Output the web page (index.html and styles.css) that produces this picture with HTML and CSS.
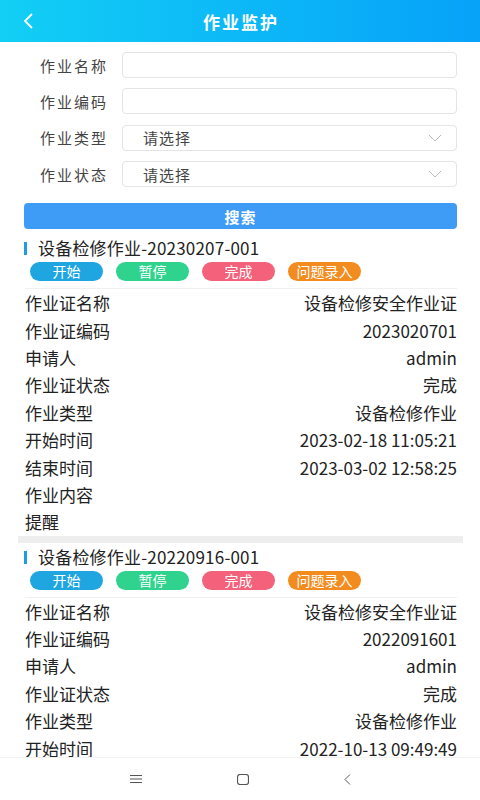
FILE: index.html
```html
<!DOCTYPE html>
<html lang="zh-CN">
<head>
    <meta charset="UTF-8">
    <meta name="viewport" content="width=device-width, initial-scale=1.0">
    <title>作业监护</title>
    <link rel="stylesheet" href="styles.css">
</head>
<body>
    <div class="header">
        <svg class="back" width="12" height="16" viewBox="0 0 12 16"><path d="M10 1 L3 8 L10 15" fill="none" stroke="#fff" stroke-width="1.8"/></svg>
        <h1>作业监护</h1>
    </div>

    <div class="main">
        <form class="search-form">
            <div class="form-row">
                <label>作业名称</label>
                <input type="text" class="field">
            </div>
            <div class="form-row">
                <label>作业编码</label>
                <input type="text" class="field">
            </div>
            <div class="form-row">
                <label>作业类型</label>
                <div class="field select">
                    <span>请选择</span>
                    <svg width="14" height="8" viewBox="0 0 14 8"><path d="M1 1 L7 7 L13 1" fill="none" stroke="#bbb" stroke-width="1"/></svg>
                </div>
            </div>
            <div class="form-row">
                <label>作业状态</label>
                <div class="field select">
                    <span>请选择</span>
                    <svg width="14" height="8" viewBox="0 0 14 8"><path d="M1 1 L7 7 L13 1" fill="none" stroke="#bbb" stroke-width="1"/></svg>
                </div>
            </div>
            <button type="button" class="search-btn">搜索</button>
        </form>

        <div class="card">
            <div class="card-title">设备检修作业-20230207-001</div>
            <div class="actions">
                <span class="pill blue">开始</span>
                <span class="pill green">暂停</span>
                <span class="pill pink">完成</span>
                <span class="pill orange">问题录入</span>
            </div>
            <div class="rows">
                <div class="row"><span>作业证名称</span><span>设备检修安全作业证</span></div>
                <div class="row"><span>作业证编码</span><span>2023020701</span></div>
                <div class="row"><span>申请人</span><span>admin</span></div>
                <div class="row"><span>作业证状态</span><span>完成</span></div>
                <div class="row"><span>作业类型</span><span>设备检修作业</span></div>
                <div class="row"><span>开始时间</span><span>2023-02-18 11:05:21</span></div>
                <div class="row"><span>结束时间</span><span>2023-03-02 12:58:25</span></div>
                <div class="row"><span>作业内容</span><span></span></div>
                <div class="row"><span>提醒</span><span></span></div>
            </div>
        </div>

        <div class="card">
            <div class="card-title">设备检修作业-20220916-001</div>
            <div class="actions">
                <span class="pill blue">开始</span>
                <span class="pill green">暂停</span>
                <span class="pill pink">完成</span>
                <span class="pill orange">问题录入</span>
            </div>
            <div class="rows">
                <div class="row"><span>作业证名称</span><span>设备检修安全作业证</span></div>
                <div class="row"><span>作业证编码</span><span>2022091601</span></div>
                <div class="row"><span>申请人</span><span>admin</span></div>
                <div class="row"><span>作业证状态</span><span>完成</span></div>
                <div class="row"><span>作业类型</span><span>设备检修作业</span></div>
                <div class="row"><span>开始时间</span><span>2022-10-13 09:49:49</span></div>
            </div>
        </div>
    </div>

    <div class="navbar">
        <svg width="12" height="8" viewBox="0 0 12 8"><path d="M0 0.5 H12 M0 4 H12 M0 7.5 H12" stroke="#555" stroke-width="1"/></svg>
        <svg width="12" height="11" viewBox="0 0 12 11"><rect x="0.5" y="0.5" width="11" height="10" rx="2.5" fill="none" stroke="#555" stroke-width="1.2"/></svg>
        <svg width="7" height="11" viewBox="0 0 7 11"><path d="M6 0.5 L1 5.5 L6 10.5" fill="none" stroke="#555" stroke-width="1"/></svg>
    </div>
</body>
</html>
```

FILE: styles.css
```css
* {
    box-sizing: border-box;
}
body {
    margin: 0;
    width: 480px;
    height: 800px;
    display: flex;
    flex-direction: column;
    overflow: hidden;
    background-color: #fff;
    font-family: "Noto Sans CJK SC", "Noto Sans", sans-serif;
    color: #222;
}
.header {
    height: 42px;
    flex-shrink: 0;
    display: flex;
    align-items: center;
    justify-content: center;
    position: relative;
    background: linear-gradient(to right, #12cff5, #07a2f9);
}
.header h1 {
    margin: 0;
    font-size: 17px;
    font-weight: bold;
    color: #fff;
    letter-spacing: 2px;
    margin-right: -2px;
}
.back {
    position: absolute;
    left: 22px;
    top: 13px;
}
.main {
    flex: 1;
    overflow: hidden;
}
.search-form {
    padding: 10px 23px 0 24px;
}
.form-row {
    display: flex;
    align-items: center;
    gap: 14px;
    margin-bottom: 10.4px;
}
.form-row label {
    width: 84px;
    text-align: right;
    font-size: 15px;
    letter-spacing: 2px;
    color: #444;
}
.field {
    flex: 1;
    height: 26px;
    border: 1px solid #e4e4e4;
    border-radius: 4px;
    background: #fff;
    font: inherit;
}
.select {
    display: flex;
    align-items: center;
    justify-content: space-between;
    padding: 0 14px 0 20px;
    font-size: 15px;
    letter-spacing: 1px;
    color: #444;
}
.search-btn {
    display: block;
    width: 100%;
    height: 26px;
    margin-top: 16px;
    border: none;
    border-radius: 4px;
    background-color: #3f9cf6;
    color: #fff;
    font-family: inherit;
    font-size: 15px;
    font-weight: bold;
    letter-spacing: 1px;
}
.card {
    margin: 5px 17px 0 18px;
    padding: 3px 6px 0 7px;
}
.card + .card {
    margin-top: 0;
    border-top: 7px solid #eee;
}
.card-title {
    position: relative;
    height: 22px;
    line-height: 22px;
    padding-left: 13px;
    font-size: 17px;
    letter-spacing: 0.2px;
    color: #222;
}
.card-title::before {
    content: "";
    position: absolute;
    left: -1px;
    top: 5px;
    width: 3px;
    height: 13px;
    background-color: #1e9ce6;
}
.actions {
    display: flex;
    gap: 13px;
    margin-top: 3px;
    padding-left: 5px;
}
.pill {
    width: 73px;
    height: 19px;
    line-height: 19px;
    border-radius: 10px;
    text-align: center;
    font-size: 14px;
    color: #fff;
}
.blue { background-color: #1fa6e1; }
.green { background-color: #30d38e; }
.pink { background-color: #f4617b; }
.orange { background-color: #f28c1f; }
.rows {
    margin-top: 7px;
    border-top: 1px solid #f0f0f0;
}
.row {
    display: flex;
    justify-content: space-between;
    height: 27.4px;
    line-height: 27.4px;
    font-size: 17px;
}
.navbar {
    height: 43px;
    flex-shrink: 0;
    display: flex;
    align-items: center;
    justify-content: center;
    gap: 95px;
    background: #fff;
    border-top: 1px solid #f2f2f2;
}
```
